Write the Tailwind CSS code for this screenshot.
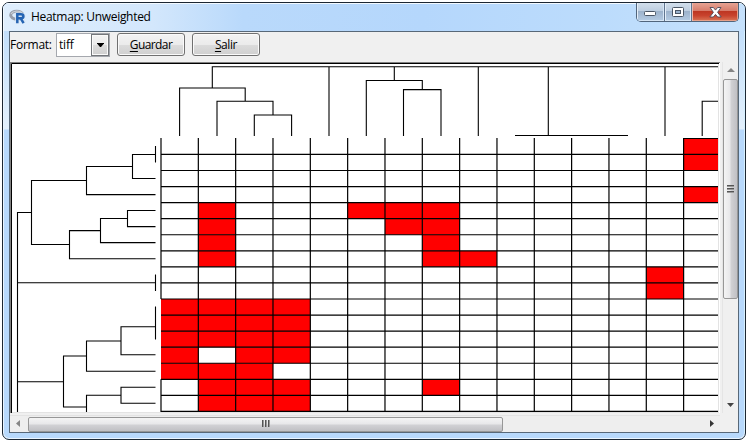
<!DOCTYPE html>
<html lang="es">
<head>
<meta charset="utf-8">
<title>Heatmap: Unweighted</title>
<script src="https://cdn.jsdelivr.net/npm/@tailwindcss/browser@4"></script>
</head>
<body class="bg-white w-[748px] h-[442px] overflow-hidden p-[2px] font-['Open_Sans','Noto_Sans',sans-serif] text-[12px] text-black">
<div class="relative w-[744px] h-[438px] rounded-[7px] border border-[#1c2733] bg-[#b8d9fc] overflow-hidden flex flex-col shadow-[inset_0_0_0_1px_#eaf5ff]">
  <!-- title bar -->
  <div class="h-[28px] shrink-0 flex items-start pl-[6px] pr-[6px] bg-[linear-gradient(90deg,#dfeefd_0,#d3e7fc_150px,#b9d9fb_240px,#b5d7fc_420px,#bcdcfc_600px,#c6e1fc_100%)] shadow-[inset_1px_1px_0_#f2f9ff]">
    <svg class="w-[17px] h-[16px] mt-[6px] shrink-0" viewBox="0 0 17 16">
      <ellipse cx="7.700" cy="6.200" rx="6" ry="4" fill="none" stroke="#989eaa" stroke-width="3"/>
      <path d="M2 4.800C4 1.800 10 1.300 13 3.600" fill="none" stroke="#c9ced5" stroke-width="1.200"/>
      <path d="M8.200 14.300V5.400h3.900c3.300 0 3.300 3.700.4 4.100l2.700 4.500" fill="none" stroke="#d9e7f5" stroke-width="4"/>
      <path d="M8.300 14.300V5.300h3.700c3.200 0 3.200 4 0 4H8.900M11.700 9.400L14.600 14.200" fill="none" stroke="#2564b3" stroke-width="2.500"/>
    </svg>
    <div class="ml-[5px] mt-[5px] leading-[18px] whitespace-nowrap tracking-[-0.3px]">Heatmap: Unweighted</div>
    <div class="ml-auto w-[103px] h-[19px] flex border border-t-0 border-[#51657c] rounded-b-[5px] overflow-hidden shrink-0">
      <div class="w-[28px] flex items-center justify-center border-r border-[#60758f] bg-[linear-gradient(#d2dfec_0,#bccde0_45%,#9cb2cb_46%,#b5cce4_100%)] shadow-[inset_1px_0_0_#e5eff9,inset_-1px_-1px_0_#d7e6f5]">
        <svg class="w-[13px] h-[11px] mt-px" viewBox="0 0 13 11"><rect x=".5" y="4.500" width="11" height="4" rx="1" fill="#fff" stroke="#4a5665"/></svg>
      </div>
      <div class="w-[27px] flex items-center justify-center border-r border-[#60758f] bg-[linear-gradient(#d2dfec_0,#bccde0_45%,#9cb2cb_46%,#b5cce4_100%)] shadow-[inset_1px_0_0_#e5eff9,inset_-1px_-1px_0_#d7e6f5]">
        <svg class="w-[12px] h-[11px] mt-px" viewBox="0 0 12 11"><rect x=".5" y=".5" width="11" height="9" rx="1" fill="#fff" stroke="#4a5665"/><rect x="3.500" y="3.500" width="5" height="3" fill="#9ab2cc" stroke="#4a5665"/></svg>
      </div>
      <div class="flex-1 flex items-center justify-center bg-[linear-gradient(#e6a393_0,#d67b6a_45%,#bd3622_46%,#c8432d_70%,#da7657_100%)] shadow-[inset_1px_0_0_#edb7a9,inset_-1px_-1px_0_#e6a089]">
        <svg class="w-[13px] h-[11px] mt-px" viewBox="0 0 13 11"><path d="M1 .5h3.400l2.100 2.600L8.600.5H12L8.600 5.300l3.600 4.700H8.700L6.500 7.400 4.300 10H.8l3.600-4.700z" fill="#fff" stroke="#4d4a5a" stroke-width=".9"/></svg>
      </div>
    </div>
  </div>
  <!-- side borders are lit down to a third of the window -->
  <div class="flex h-[402px] shrink-0">
    <div class="w-[6px] shrink-0 bg-[linear-gradient(#c3dffb_0,#e3f0fc_98px,#b8d9fc_99px)] border-l border-[#eaf5ff]"></div>
    <div class="w-[730px] h-[402px] border border-[#586878] bg-[#f0f0f0] flex flex-col">
      <!-- toolbar -->
      <div class="h-[30px] shrink-0 flex items-start">
        <div class="mt-[4px] leading-[18px] w-[46px] whitespace-nowrap tracking-[-0.25px]">Format:</div>
        <div class="w-[54px] h-[24px] mt-[1px] bg-white border border-[#a5a8ae] flex">
          <div class="flex-1 pl-[2px] leading-[21px] tracking-[-0.2px]">tiff</div>
          <div class="w-[18px] h-[22px] border border-[#73767a] bg-[linear-gradient(#f3f3f3_0,#ebebeb_50%,#dcdcdc_51%,#cfcfcf_100%)] flex items-center justify-center shadow-[inset_0_0_0_1px_#fafafa]">
            <svg class="w-[7px] h-[4px]" viewBox="0 0 7 4"><path d="M0 0h7v.5L4 4H3L0 .5z"/></svg>
          </div>
        </div>
        <button class="ml-[7px] mt-[1px] w-[68px] h-[23px] border border-[#707070] rounded-[3px] bg-[linear-gradient(#f3f3f3_0,#ebebeb_50%,#dcdcdc_51%,#cfcfcf_100%)] shadow-[inset_0_0_0_1px_#fafafa] leading-[21px] whitespace-nowrap tracking-[-0.6px]"><span class="underline underline-offset-2">G</span>uardar</button>
        <button class="ml-[7px] mt-[1px] w-[68px] h-[23px] border border-[#707070] rounded-[3px] bg-[linear-gradient(#f3f3f3_0,#ebebeb_50%,#dcdcdc_51%,#cfcfcf_100%)] shadow-[inset_0_0_0_1px_#fafafa] leading-[21px] whitespace-nowrap tracking-[-0.4px]"><span class="underline underline-offset-2">S</span>alir</button>
      </div>
      <!-- plot and vertical scrollbar -->
      <div class="flex h-[351px] shrink-0">
        <div class="w-[710px] h-[351px] border-t border-l border-[#808080] bg-white shrink-0">
          <svg id="plot" class="w-[709px] h-[350px] block" viewBox="11 63 709 350">
            <g id="cells" fill="#f00"></g>
            <path id="grid" fill="none" stroke="#000" stroke-width="1.200"></path>
            <path fill="none" stroke="#000" stroke-width="1.100" d="M718 66.700H212.300V88M179.600 136V88H245.200V101M217 136V101.300H273V115M254.300 136V115H291.600V136M329 67V136M394.300 67V80.500M366.300 136V80.500H422.300V89.500M403.500 136V89.600H441V136M478.300 67V136M548.300 67V136M515 135.500H628M665 67V136M718 101.200H702.200V136"/>
            <path fill="none" stroke="#000" stroke-width="1.100" d="M17.500 412V212.500H31.500M86.500 180.500H31.500V244.500H69.500M132.500 166.500H86.500V194.600H155.500M155.500 154.500H132.500V178.500H155.500M155.500 146V162.500M100.500 230.600H69.500V258.700H155.500M127.500 218.500H100.500V242.600H155.500M155.500 210.500H127.500V226.600H155.500M17.500 282.800H155.500M155.500 274.500V291M155.500 306.500V339.500M155.500 326.800H121V354.800H155.500M121 341H86.500V371.200H155.500M86.500 356H63.500V407H86.500M17.500 381.700H63.500M86.500 412V395.200H121M155.500 387.300H121V403.200H155.500"/>
            <path d="M11.500 413V63.500H719" fill="none" stroke="#000"/>
            <path d="M718.500 64V413M12 412.500H719" fill="none" stroke="#e3e3e3"/>
          </svg>
        </div>
        <div class="ml-[2px] w-[16px] h-[351px] flex flex-col items-center bg-[#f0f0f0] border-l border-[#e5e5e5]">
          <svg class="w-[8px] h-[4px] mt-[6px] mb-[7px] shrink-0" viewBox="0 0 8 4"><path d="M0 4L4 0l4 4z" fill="#858585"/></svg>
          <div class="w-[15px] h-[220px] shrink-0 border border-[#979797] rounded-[2px] bg-[linear-gradient(90deg,#f4f4f4_0,#e7e7e9_48%,#d2d2d5_52%,#c0c0c4_100%)] flex flex-col items-center justify-center gap-[2px] pb-[2px]">
            <div class="w-[7px] h-px bg-[#555] shadow-[0_1px_0_#999]"></div>
            <div class="w-[7px] h-px bg-[#555] shadow-[0_1px_0_#999]"></div>
            <div class="w-[7px] h-px bg-[#555] shadow-[0_1px_0_#999]"></div>
          </div>
          <svg class="w-[7px] h-[4px] mt-auto mb-[6px] shrink-0" viewBox="0 0 7 4"><path d="M0 0h7L3.500 4z" fill="#444"/></svg>
        </div>
      </div>
      <!-- horizontal scrollbar -->
      <div class="mt-[2px] h-[17px] w-[710px] flex items-center bg-[#eee] border-t border-[#e3e3e3]">
        <svg class="w-[4px] h-[7px] ml-[6px] mr-[8px] mb-[2px] shrink-0" viewBox="0 0 4 7"><path d="M4 0v7L0 3.500z" fill="#858585"/></svg>
        <div class="w-[475px] h-[15px] shrink-0 border border-[#979797] rounded-[2px] bg-[linear-gradient(#f4f4f4_0,#e7e7e9_48%,#d2d2d5_52%,#c0c0c4_100%)] flex items-center justify-center gap-[2px] pb-[2px]">
          <div class="h-[7px] w-px bg-[#555] shadow-[1px_0_0_#999]"></div>
          <div class="h-[7px] w-px bg-[#555] shadow-[1px_0_0_#999]"></div>
          <div class="h-[7px] w-px bg-[#555] shadow-[1px_0_0_#999]"></div>
        </div>
        <svg class="w-[4px] h-[7px] ml-auto mr-[6px] mb-[2px] shrink-0" viewBox="0 0 4 7"><path d="M0 0v7L4 3.500z" fill="#333"/></svg>
      </div>
    </div>
    <div class="flex-1 bg-[linear-gradient(#c3dffb_0,#e3f0fc_98px,#b8d9fc_99px)] border-r border-[#d7f0ff]"></div>
  </div>
</div>
<script>
  // One string per heatmap row; each character is one column.
  const rows = [
    '..............#', '..............#', '...............', '..............#',
    '.#...###.......', '.#....##.......', '.#.....#.......', '.#.....##......',
    '.............#.', '.............#.', '####...........', '####...........',
    '####...........', '#.##...........', '###............', '.###...#.......',
    '.###...........'
  ];
  const X = i => Math.min(718, 161 + i * 37.330);
  const Y = j => 138.400 + j * 16.060;
  let cells = '', d = '';
  rows.forEach((row, r) => [...row].forEach((v, c) => {
    if (v === '#') cells += `<rect x="${X(c)}" y="${Y(r)}" width="${X(c + 1) - X(c)}" height="16.060"/>`;
  }));
  for (let j = 1; j <= 17; j++) d += `M161 ${Y(j)}H718`;
  for (let i = 1; i <= 14; i++) d += `M${X(i)} 138V412`;
  d += `M161 138V${Y(10)}M161 ${Y(15)}V412M${X(14)} 138.500H718`;
  document.getElementById('cells').innerHTML = cells;
  document.getElementById('grid').setAttribute('d', d);
</script>
</body>
</html>
